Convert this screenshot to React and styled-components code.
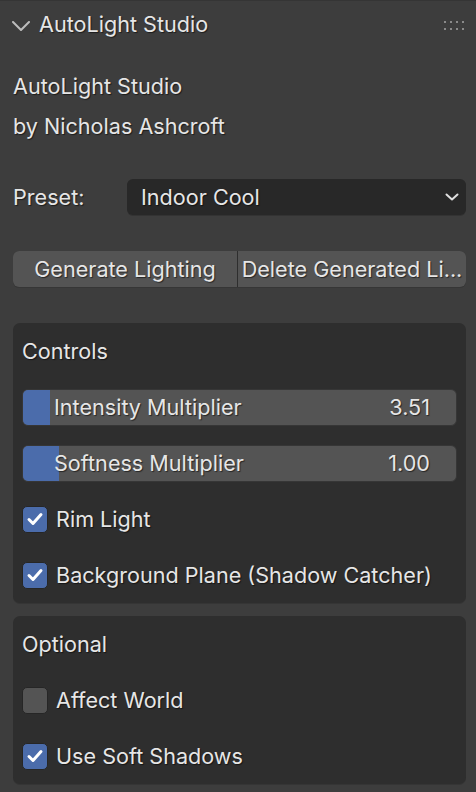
import styled, { createGlobalStyle } from "styled-components";

const GlobalStyle = createGlobalStyle`
  html, body {
    margin: 0;
    padding: 0;
    background: #3d3d3d;
  }
  body {
    font-family: "Inter", "Noto Sans", "DejaVu Sans", sans-serif;
    color: #e6e6e6;
  }
`;

const Panel = styled.div`
  width: 476px;
  height: 792px;
  box-sizing: border-box;
  background: #3d3d3d;
  border-top: 1px solid #353535;
  overflow: hidden;
  font-size: 21.6px;
  text-shadow: 1px 1px 1px rgba(0, 0, 0, 0.55);
`;

const Header = styled.div`
  height: 49px;
  display: flex;
  align-items: center;
  padding: 0 12px 0 12px;
  gap: 9px;
`;

const HeaderTitle = styled.span`
  flex: 1;
  line-height: 1;
  padding-bottom: 1px;
`;

const Grip = styled.div`
  display: grid;
  grid-template-columns: repeat(4, 2px);
  grid-auto-rows: 2px;
  column-gap: 4px;
  row-gap: 5px;
  span {
    background: #8a8a8a;
  }
`;

const Body = styled.div`
  padding: 16px 10px 0 13px;
  display: flex;
  flex-direction: column;
`;

const TextLine = styled.div`
  height: 40px;
  display: flex;
  align-items: center;
`;

const Row = styled.div`
  height: 56px;
  display: flex;
  align-items: center;
  margin-top: ${(p) => p.$mt || 0}px;
`;

const Label = styled.span`
  width: 114px;
`;

const Dropdown = styled.div`
  flex: 1;
  height: 36px;
  box-sizing: border-box;
  background: #282828;
  border-radius: 6px;
  display: flex;
  align-items: center;
  justify-content: space-between;
  padding: 0 7px 0 14px;
  box-shadow: 0 1px 0 #333;
`;

const ButtonGroup = styled.div`
  flex: 1;
  display: flex;
  gap: 1px;
  background: #2e2e2e;
  border-radius: 6px;
  box-shadow: 0 1px 0 #363636;
`;

const Button = styled.div`
  flex: ${(p) => p.$w};
  height: 36px;
  background: #545454;
  display: flex;
  align-items: center;
  justify-content: center;
  white-space: nowrap;
  overflow: hidden;
  border-radius: ${(p) => (p.$first ? "6px 0 0 6px" : "0 6px 6px 0")};
`;

const Box = styled.div`
  background: #2e2e2e;
  border-radius: 7px;
  padding: 0 9px;
  margin-top: ${(p) => p.$mt}px;
  box-shadow: 0 1px 0 #353535;
`;

const Slider = styled.div`
  position: relative;
  flex: 1;
  height: 37px;
  box-sizing: border-box;
  background: #545454;
  border: 1px solid #363636;
  border-radius: 6px;
  overflow: hidden;
  display: flex;
  align-items: center;
  justify-content: space-between;
  padding: 0 26px 0 31px;
`;

const Fill = styled.div`
  position: absolute;
  left: 0;
  top: 0;
  bottom: 0;
  background: #4b6cab;
`;

const SliderText = styled.span`
  position: relative;
`;

const CheckRow = styled.div`
  height: 56px;
  display: flex;
  align-items: center;
  gap: 8px;
`;

const CheckBox = styled.div`
  width: 26px;
  height: 27px;
  box-sizing: border-box;
  border-radius: 5px;
  border: 1px solid #262626;
  background: ${(p) => (p.$on ? "#4b6cab" : "#545454")};
  display: flex;
  align-items: center;
  justify-content: center;
`;

const Chevron = () => (
  <svg width="18" height="10" viewBox="0 0 18 10" fill="none">
    <path d="M1 1 L9 9 L17 1" stroke="#bdbdbd" strokeWidth="2" strokeLinecap="round" strokeLinejoin="round" />
  </svg>
);

const Check = ({ on, label }) => (
  <CheckRow>
    <CheckBox $on={on}>
      {on && (
        <svg width="18" height="16" viewBox="0 0 18 16" fill="none">
          <path d="M3 8.5 L7 12.5 L15 3.5" stroke="#fff" strokeWidth="3" strokeLinecap="round" strokeLinejoin="round" />
        </svg>
      )}
    </CheckBox>
    <span>{label}</span>
  </CheckRow>
);

export default function App() {
  return (
    <>
      <GlobalStyle />
      <Panel>
        <Header>
          <Chevron />
          <HeaderTitle>AutoLight Studio</HeaderTitle>
          <Grip>
            {Array.from({ length: 8 }).map((_, i) => (
              <span key={i} />
            ))}
          </Grip>
        </Header>
        <Body>
          <TextLine>AutoLight Studio</TextLine>
          <TextLine>by Nicholas Ashcroft</TextLine>
          <Row $mt={23}>
            <Label>Preset:</Label>
            <Dropdown>
              <span>Indoor Cool</span>
              <svg width="14" height="8" viewBox="0 0 14 8" fill="none">
                <path d="M1.5 1.5 L7 6.5 L12.5 1.5" stroke="#e0e0e0" strokeWidth="2" strokeLinecap="round" strokeLinejoin="round" />
              </svg>
            </Dropdown>
          </Row>
          <Row $mt={16}>
            <ButtonGroup>
              <Button $first $w={224}>Generate Lighting</Button>
              <Button $w={228}>Delete Generated Li...</Button>
            </ButtonGroup>
          </Row>
          <Box $mt={26}>
            <Row>Controls</Row>
            <Row>
              <Slider>
                <Fill style={{ width: "27px" }} />
                <SliderText>Intensity Multiplier</SliderText>
                <SliderText>3.51</SliderText>
              </Slider>
            </Row>
            <Row>
              <Slider>
                <Fill style={{ width: "36px" }} />
                <SliderText>Softness Multiplier</SliderText>
                <SliderText>1.00</SliderText>
              </Slider>
            </Row>
            <Check on label="Rim Light" />
            <Check on label="Background Plane (Shadow Catcher)" />
          </Box>
          <Box $mt={13}>
            <Row>Optional</Row>
            <Check label="Affect World" />
            <Check on label="Use Soft Shadows" />
          </Box>
        </Body>
      </Panel>
    </>
  );
}
